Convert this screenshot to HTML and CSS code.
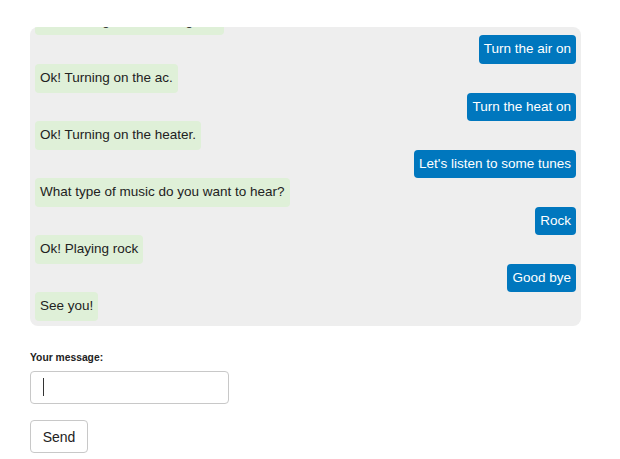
FILE: index.html
```html
<!DOCTYPE html>
<html lang="en">
<head>
<meta charset="utf-8">
<title>Chat</title>
<link rel="stylesheet" href="styles.css">
</head>
<body>
<div class="page">
  <div class="chat">
    <div class="msg bot"><span class="bubble">Ok! Turning on the ceiling fan.</span></div>
    <div class="msg user"><span class="bubble">Turn the air on</span></div>
    <div class="msg bot"><span class="bubble">Ok! Turning on the ac.</span></div>
    <div class="msg user"><span class="bubble">Turn the heat on</span></div>
    <div class="msg bot"><span class="bubble">Ok! Turning on the heater.</span></div>
    <div class="msg user"><span class="bubble">Let's listen to some tunes</span></div>
    <div class="msg bot"><span class="bubble">What type of music do you want to hear?</span></div>
    <div class="msg user"><span class="bubble">Rock</span></div>
    <div class="msg bot"><span class="bubble">Ok! Playing rock</span></div>
    <div class="msg user"><span class="bubble">Good bye</span></div>
    <div class="msg bot"><span class="bubble">See you!</span></div>
  </div>
  <form class="composer">
    <label class="label">Your message:</label>
    <div class="field"><span class="caret"></span></div>
    <button type="button" class="send">Send</button>
  </form>
</div>
</body>
</html>
```
FILE: styles.css
```css
html, body {
  margin: 0;
  padding: 0;
  background: #fff;
}
body {
  font-family: "Liberation Sans", Arial, sans-serif;
  color: #333;
}
.page {
  padding: 27px 0 0 30px;
}
.chat {
  width: 551px;
  height: 299px;
  box-sizing: border-box;
  padding: 0 5px 5px 5px;
  background: #eeeeee;
  border-radius: 8px;
  overflow: hidden;
  display: flex;
  flex-direction: column;
  justify-content: flex-end;
}
.msg {
  display: flex;
  flex-shrink: 0;
}
.msg.user {
  justify-content: flex-end;
}
.bubble {
  display: block;
  font-size: 13.5px;
  line-height: 20.57px;
  padding: 4px 5px;
  border-radius: 4px;
}
.bot .bubble {
  background: #dff0d8;
  color: #222;
}
.user .bubble {
  background: #0077be;
  color: #fff;
}
.composer {
  display: flex;
  flex-direction: column;
  align-items: flex-start;
  margin: 0;
  padding-top: 25px;
}
.label {
  font-size: 10.3px;
  font-weight: bold;
  color: #222;
  line-height: 14px;
}
.field {
  margin-top: 6px;
  width: 199px;
  height: 33px;
  box-sizing: border-box;
  border: 1px solid #c8c8c8;
  border-radius: 4px;
  background: #fff;
  padding: 6px 0 0 12px;
}
.caret {
  display: block;
  width: 1px;
  height: 18px;
  background: #333;
}
.send {
  margin-top: 16px;
  width: 58px;
  height: 33px;
  box-sizing: border-box;
  border: 1px solid #c8c8c8;
  border-radius: 4px;
  background: #fff;
  font-family: "Liberation Sans", Arial, sans-serif;
  font-size: 14px;
  color: #222;
  padding: 0;
}
```
